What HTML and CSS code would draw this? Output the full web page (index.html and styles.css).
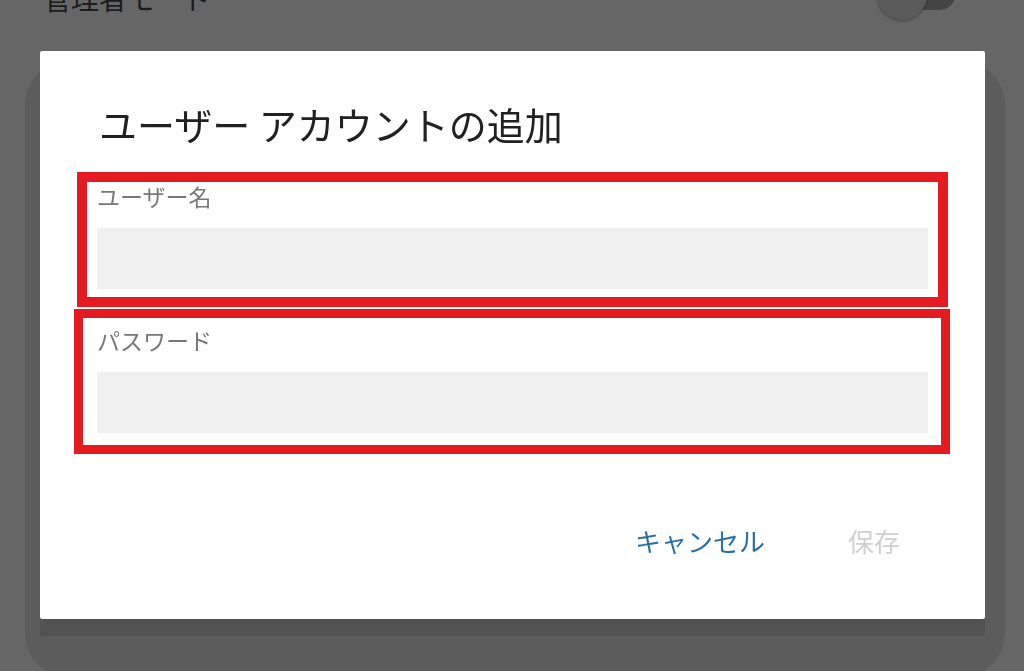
FILE: index.html
```html
<!DOCTYPE html>
<html lang="ja">
<head>
<meta charset="utf-8">
<title>ユーザー アカウントの追加</title>
<link rel="stylesheet" href="styles.css">
</head>
<body>
<div class="page">
  <div class="setting-row">
    <span class="setting-label">管理者モード</span>
    <span class="switch"><span class="switch-thumb"></span></span>
  </div>
</div>
<div class="scrim">
  <div class="dialog">
    <h2 class="dialog-title">ユーザー アカウントの追加</h2>
    <div class="field field-user">
      <div class="field-label">ユーザー名</div>
      <div class="field-input"></div>
    </div>
    <div class="field field-pass">
      <div class="field-label">パスワード</div>
      <div class="field-input"></div>
    </div>
    <div class="dialog-actions">
      <button class="btn btn-cancel">キャンセル</button>
      <button class="btn btn-save" disabled>保存</button>
    </div>
  </div>
</div>
</body>
</html>
```
FILE: styles.css
```css
html, body {
  margin: 0;
  padding: 0;
  height: 100%;
  overflow: hidden;
}

body {
  font-family: "Noto Sans CJK JP", "Noto Sans", sans-serif;
  background: #ffffff;
}

.page {
  display: flow-root;
  height: 100%;
  background: #ffffff;
}

.setting-row {
  display: flex;
  align-items: flex-start;
  justify-content: space-between;
  margin-top: -20px;
  padding: 0 69px 0 43px;
  height: 30px;
}

.setting-label {
  margin-top: 4px;
  font-size: 28px;
  line-height: 28px;
  color: #4a4a4a;
}

.switch {
  position: relative;
  width: 75px;
  height: 30px;
  border-radius: 15px;
  background: #aaaaaa;
}

.switch-thumb {
  position: absolute;
  left: -3px;
  top: -10px;
  width: 50px;
  height: 50px;
  border-radius: 50%;
  background: #e2e2e2;
  box-shadow: 0 1px 3px rgba(0, 0, 0, 0.35);
}

.scrim {
  position: fixed;
  inset: 0;
  background: rgba(0, 0, 0, 0.6);
  padding: 51px 0 0 40px;
}

.dialog {
  position: relative;
  width: 945px;
  height: 568px;
  box-sizing: border-box;
  background: #ffffff;
  border-radius: 2px;
  padding: 54px 57px 0 57px;
  display: flex;
  flex-direction: column;
  box-shadow: 0 17px 0 0 rgba(0, 0, 0, 0.12);
}

.dialog::before {
  content: "";
  position: absolute;
  top: 9px;
  left: -15px;
  right: -20px;
  bottom: -59px;
  border-radius: 45px;
  background: rgba(0, 0, 0, 0.1);
  z-index: -1;
}

.dialog-title {
  margin: 0 0 42px 0;
  padding-left: 2px;
  font-size: 38px;
  line-height: 38px;
  font-weight: 400;
  color: #212121;
  white-space: nowrap;
}

.field {
  position: relative;
  display: flex;
  flex-direction: column;
  gap: 20px;
}

.field + .field {
  margin-top: 40px;
}

.field-label {
  font-size: 23px;
  line-height: 23px;
  color: #787878;
}

.field-input {
  height: 61px;
  background: #f0f0f0;
}

.field-user::after,
.field-pass::after {
  content: "";
  position: absolute;
  border-style: solid;
  border-color: #e41c21;
  pointer-events: none;
}

.field-user::after {
  top: -13px;
  bottom: -18px;
  left: -20px;
  right: -20px;
  border-width: 10px;
}

.field-pass::after {
  top: -20px;
  bottom: -21px;
  left: -23px;
  right: -22px;
  border-width: 9px;
}

.dialog-actions {
  display: flex;
  justify-content: flex-end;
  gap: 27px;
  margin-top: 95px;
}

.btn {
  background: none;
  border: 0;
  margin: 0;
  padding: 0 28px;
  font-family: inherit;
  font-size: 26px;
  line-height: 26px;
  font-weight: 400;
}

.btn-cancel {
  color: #2c6fa3;
}

.btn-save {
  color: #d0d0d0;
  padding-right: 28px;
}
```
